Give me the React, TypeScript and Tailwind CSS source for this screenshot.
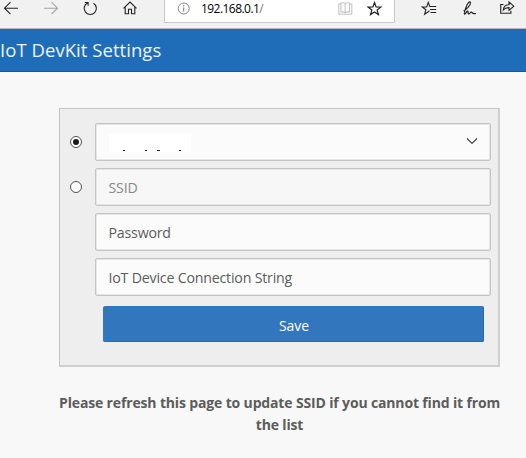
import React from "react";

type IconProps = { className?: string; width?: number; children: React.ReactNode };

function Icon({ className = "", width = 16, children }: IconProps) {
  return (
    <svg
      className={`shrink-0 ${className}`}
      width={width}
      height="16"
      viewBox={`0 0 ${width} 16`}
      fill="none"
      stroke="currentColor"
      strokeWidth="1.1"
    >
      {children}
    </svg>
  );
}

function Toolbar() {
  return (
    <div className="flex h-[29px] items-start border-b border-[#b9b9b9] bg-[#f1f1f1] text-[#222]">
      <div className="flex w-[164px] pl-[3px]">
        <Icon className="mr-6">
          <path d="M15 8.2H1.5M7.5 2.2l-6 6 6 6" />
        </Icon>
        <Icon className="mr-[23px] text-[#a3a3a3]">
          <path d="M1 8.2h13.5M8.5 2.2l6 6-6 6" />
        </Icon>
        <Icon className="mr-6">
          <path d="M11.5 3.2A6.1 6.1 0 1 1 5.8 2.8M2.8 2.5h3.3v3.3" />
        </Icon>
        <Icon>
          <path d="M1.5 8.3 8 2.1l6.5 6.2M3.2 7.2v6.5h3.3V9.2h3v4.5h3.3V7.2" />
        </Icon>
      </div>
      <div className="flex h-[23px] w-[231px] border-x border-b border-[#c9c9c9] bg-white">
        <Icon className="ml-[11px] text-[#777]">
          <circle cx="7.7" cy="8.5" r="5.5" strokeWidth="0.9" />
          <path d="M7.7 7.5v4M7.7 5.2v1.2" />
        </Icon>
        <span className="ml-[9px] w-[128px] pt-px text-[12px] leading-4 tracking-[-0.55px] text-black">
          192.168.0.1<span className="text-[#777]">/</span>
        </span>
        <Icon className="ml-2 text-[#c4c4c4]">
          <path d="M8.2 3.7C7 2.7 5 2.7 4 3v9c1.5-.3 3-.2 4.200.8 1.200-1 2.700-1.100 4.200-.8V3c-1-.3-3-.3-4.200.7v9M4 4H1.800v10.200h13V4h-2.300" />
        </Icon>
        <Icon className="ml-[14px]">
          <path
            strokeWidth="1.200"
            d="m7.500 2.500 1.600 4.500 4.700.1-3.700 2.900 1.300 4.600-3.900-2.700-3.900 2.700 1.300-4.600L1.200 7.100l4.700-.1z"
          />
        </Icon>
      </div>
      <Icon className="ml-[26px]">
        <path d="M8.500 10.800 7.300 11.700l-3.700 2.500 1.300-4.500L1.300 7l4.400-.1L7.300 2.300l1.600 4.600M8.700 6.500h6.500M9 9.500h6.200M9.500 12.500h5.700" />
      </Icon>
      <Icon className="ml-6">
        <path
          strokeWidth="1.200"
          d="M2.600 10.800C5 9.800 9.700 5.500 9.500 2.600 9 .3 6.200 3.200 4.900 7.600c-1.200 3.200-2.200 6.200-1.400 6.500.9.200 1.700-2.700 3-3 1.200-.2-.1 2.900 1.300 2.900 1.200 0 1.400-2 2.500-1.900 1.200.1.500 2.400 4.600 1.400"
        />
      </Icon>
      <Icon className="ml-[22px]">
        <path d="M4.500 4.500H1.700v8.700h10.200v-2.500M4.300 10C4.500 7 6.500 4.800 10 4.800V2l4.800 4.200L10 10.400V7.600C7.500 7.500 5.700 8.300 4.300 10z" />
      </Icon>
    </div>
  );
}

const field =
  "flex h-[38px] w-[396px] shrink-0 items-center rounded-[2px] border border-[#c4c4c4] pl-[12.500px] pt-[2px] text-[14.200px] tracking-[-0.2px] shadow-[inset_0_0_0_1px_#e6e6e6]";

function Radio({ checked = false }: { checked?: boolean }) {
  return (
    <span className="ml-[10px] mr-[13px] flex size-3 shrink-0 items-center justify-center rounded-full border border-[#505050] bg-white">
      {checked && <span className="size-1.5 rounded-full bg-[#1b1b1b]" />}
    </span>
  );
}

export default function App() {
  return (
    <div className="h-[458px] w-[526px] overflow-hidden bg-[#f8f8f8] font-['Open_Sans','Noto_Sans',sans-serif] text-[#5c5c5c]">
      <Toolbar />
      <header className="flex h-[43px] items-center border-b border-[#1559a1] bg-[#1f6cb8] text-[18.500px] tracking-[0.05px] whitespace-nowrap text-[#eef4fa]">
        <h1>IoT DevKit Settings</h1>
      </header>
      <main className="ml-[59px] w-[441px] pt-9">
        <form className="flex h-[259px] flex-col gap-[7px] border border-r-2 border-b-2 border-[#c3c3c3] border-r-[#d0d0d0] border-b-[#d0d0d0] bg-[#eee] pt-[14px]">
          <div className="flex items-center">
            <Radio checked />
            <div className={`${field} justify-between bg-[#fbfbfb]`}>
              <div className="flex h-[18px] w-[82px] items-end bg-white">
                <svg width="82" height="2" viewBox="0 0 82 2" fill="#222">
                  <path d="M14 0h2v1h-2zM36 0h2v1h-2zM48 0h3v1h-3zM70 0h2v1h-2z" />
                </svg>
              </div>
              <svg className="mr-3 -mt-1" width="12" height="8" viewBox="0 0 12 8" fill="none" stroke="#444" strokeWidth="1.100">
                <path d="m1 1.500 5 5 5-5" />
              </svg>
            </div>
          </div>
          <div className="flex items-center">
            <Radio />
            <div className={`${field} bg-[#f7f7f7] text-[#8a8a8a]`}>SSID</div>
          </div>
          <div className={`${field} ml-[35px] bg-[#fbfbfb]`}>Password</div>
          <div className={`${field} ml-[35px] bg-[#fbfbfb]`}>IoT Device Connection String</div>
          <button className="mt-[3px] ml-[43px] h-9 w-[381px] rounded-[2px] border-r border-b border-[#1f6cb8] bg-[#3277bd] pt-[3px] pl-0.5 text-[14px] tracking-[-0.1px] text-white">
            Save
          </button>
        </form>
        <p className="pt-[25px] text-center text-[14px] leading-[22px] font-bold tracking-[-0.15px]">
          <span className="block whitespace-nowrap">Please refresh this page to update SSID if you cannot find it from</span>
          <span className="block">the list</span>
        </p>
      </main>
    </div>
  );
}
